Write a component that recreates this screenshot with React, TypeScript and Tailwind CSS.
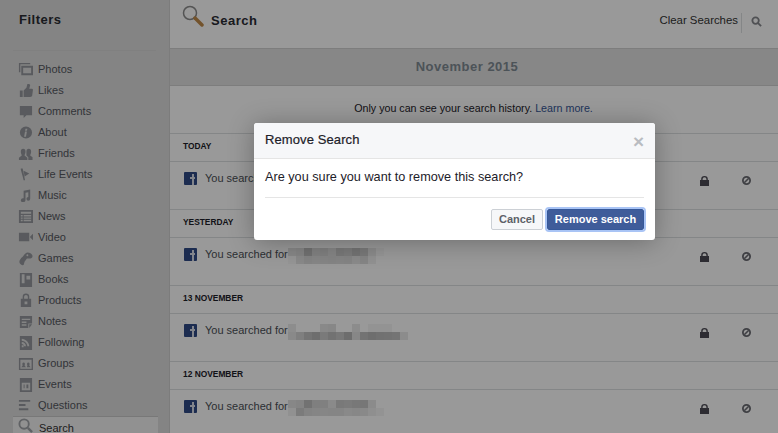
import type { ReactNode } from "react"

const Ico = ({ children, className = "" }: { children: ReactNode; className?: string }) => (
  <svg viewBox="0 0 16 16" className={"w-[15px] h-[15px] shrink-0 fill-[#94979d] " + className}>
    {children}
  </svg>
)

const filters: { label: string; icon: ReactNode }[] = [
  { label: "Photos", icon: <path fillRule="evenodd" d="M1 1h12v1.500H2.500V11H1zM3.500 4H16v10H3.500zM5.500 6v6H14V6z" /> },
  { label: "Likes", icon: <path d="M2 8h3v7H2zM6 8l3-3 1-4h2l1 1-1 4h3l1 1-1 7-2 1H6z" /> },
  { label: "Comments", icon: <path d="M2 2h13v10H9l-3 3v-3H2z" /> },
  { label: "About", icon: <path fillRule="evenodd" d="M8.500 1.500a6.500 6.500 0 1 1 0 13 6.500 6.500 0 0 1 0-13zM8 4l-.5 2h2L10 4zM7.500 7L6.500 12.500h2l1-5.500z" /> },
  { label: "Friends", icon: <path d="M5.500 3a2.500 3 0 0 1 2.500 3c0 2-1 3-1 4l3 2.500V15H1v-2.500L4 10c0-1-1-2-1-4a2.500 3 0 0 1 2.500-3zM11.500 3a2.500 3 0 0 1 2.500 3c0 2-1 3-1 4l2.500 2V15H11v-3l-2-2c0-1 0-2 0-4a2.500 3 0 0 1 2.500-3z" /> },
  { label: "Life Events", icon: <path d="M3 1.500h2L7.500 14H6L5 10 3 3zM6 4l6 3-5 3z" /> },
  { label: "Music", icon: <path d="M6 3l7-1.500v10a2 2 0 1 1-2-2V4.500L8 5v8a2.500 2 0 1 1-2-2z" /> },
  { label: "News", icon: <path fillRule="evenodd" d="M1 1h15v14H1zM3 3v2h11V3zM3 6.500V8h2V6.500zM6 6.500V8h8V6.500zM3 9v1.500h2V9zM6 9v1.500h8V9zM3 11.500V13h2v-1.500zM6 11.500V13h8v-1.500z" /> },
  { label: "Video", icon: <path d="M1 3h11v9H1zM13 7l3-3v7l-3-3z" /> },
  { label: "Games", icon: <path fillRule="evenodd" d="M10 1.500c3 0 5.500 2 5.500 4 0 1.500-1.500 2.500-3.500 2.500H9.500L7 11.500 6 15c-2 .5-4-1-4.500-3-.3-2 1.500-4.500 3.500-6l2-2.500c1-1 2-2 3-2zM10 3.500a1 1 0 1 0 0 2 1 1 0 0 0 0-2z" /> },
  { label: "Books", icon: <path fillRule="evenodd" d="M2 1h13v15H2zM4 2.500V12h3V2.500zM9 4v4h4V4z" /> },
  { label: "Products", icon: <path fillRule="evenodd" d="M3 6h2V4a3.500 3.500 0 0 1 7 0v2h2v9H3zM6.500 6h4V4a2 2 0 0 0-4 0zM7 9v3h3V9z" /> },
  { label: "Notes", icon: <path fillRule="evenodd" d="M2 2h13v8h-4v5H2zM4 5v1.500h9V5zM4 8v1.500h5V8zM4 11v1.500h5V11zM12 11h3l-3 4z" /> },
  { label: "Following", icon: <path fillRule="evenodd" d="M2 1h13v15H2zM4 4v2c3 0 6 3 6 6h2c0-4-4-8-8-8zM4 7.500v2c1.500 0 2.500 1 2.500 2.500h2c0-2.500-2-4.500-4.500-4.500zM4 11v2h2v-2z" /> },
  { label: "Groups", icon: <path fillRule="evenodd" d="M1 2h15v13H1zM2.500 4v9.500h12V4zM6 7a1.500 2 0 0 1 1 3l1.500 2H3.500L5 10a1.500 2 0 0 1 1-3zM11 7a1.500 2 0 0 1 1 3l1.500 2H9.500L10 10a1.500 2 0 0 1 1-3z" /> },
  { label: "Events", icon: <path fillRule="evenodd" d="M2 1h13v15H2zM4 6v8h9V6zM6 8h1v4H6zM9 8h2v4H9z" /> },
  { label: "Questions", icon: <path d="M1 2h12v2H1zM1 6.500h7v2H1zM1 11h10v2H1z" /> },
]

// pixelated parts of the searched term, grey levels per 8px block
const blurs = {
  a: [
    [226, 220, 188, 216, 212, 222, 200, 206, 192, 202, 232, 248],
    [248, 228, 220, 224, 222, 220, 222, 220, 230, 222, 242, 255],
  ],
  b: [
    [236, 255, 255, 255, 228, 226, 255, 255, 234, 255, 246, 246, 246, 255, 255],
    [228, 212, 194, 184, 204, 190, 200, 182, 226, 192, 184, 188, 190, 194, 234],
  ],
  c: [
    [226, 220, 190, 212, 214, 230, 202, 206, 200, 198, 232, 255],
    [242, 206, 218, 222, 224, 222, 222, 228, 226, 228, 238, 246],
  ],
}

const Blur = ({ rows }: { rows: number[][] }) => (
  <div className="flex flex-col">
    {rows.map((row, i) => (
      <div key={i} className="flex">
        {row.map((g, j) => (
          <div key={j} className="w-[8px] h-[8px]" style={{ backgroundColor: `rgb(${g},${g},${g})` }} />
        ))}
      </div>
    ))}
  </div>
)

const FbIcon = () => (
  <div className="relative w-[13px] h-[13px] rounded-[1px] bg-[#2f4a85] overflow-hidden shrink-0">
    <div className="absolute right-[2px] top-[5px] w-[5px] h-[2px] bg-[#d8dde8]" />
    <div className="absolute right-[3px] top-[2px] w-[2px] h-[11px] bg-[#d8dde8]" />
  </div>
)

const Lock = () => (
  <svg viewBox="0 0 9 10" className="w-[9px] h-[10px] fill-[#4c4a54]">
    <path fillRule="evenodd" d="M0 4h1.200V3a3.300 3 0 0 1 6.600 0v1H9v6H0zM2.600 4h3.800V3a1.900 1.700 0 0 0-3.800 0z" />
  </svg>
)

const Block = () => (
  <svg viewBox="0 0 10 10" className="w-[9px] h-[9px]">
    <circle cx="5" cy="5" r="4" fill="none" stroke="#6a6b72" strokeWidth="2" />
    <path d="M2.500 7.500l5-5" stroke="#6a6b72" strokeWidth="1.800" />
  </svg>
)

const Group = ({ date, blur }: { date: string; blur?: number[][] }) => (
  <div>
    <div className="h-[28px] flex items-start pt-[6px] px-[13px] border-t border-[#dddfe2] text-[8.400px] font-bold uppercase text-[#1d2129]">
      {date}
    </div>
    <div className="h-[48px] border-t border-[#dddfe2] flex items-start pl-[14px] pt-[10px]">
      <FbIcon />
      <div className="ml-[8px] flex items-start w-[495px] h-[16px] text-[#4b4f56] text-[11px] leading-[13px] whitespace-nowrap">
        <span>You searched for</span>
        {blur && <Blur rows={blur} />}
      </div>
      <div className="mt-[4px]"><Lock /></div>
      <div className="ml-[33px] mt-[4px]"><Block /></div>
    </div>
  </div>
)

export default function App() {
  return (
    <div className="relative w-[778px] h-[433px] overflow-hidden flex bg-white font-['Liberation_Sans',Arial,sans-serif]">
      <aside className="w-[170px] shrink-0 bg-[#dcdcdc] border-r border-[#cfcfcf]">
        <div className="h-[51px] mx-[13px] border-b border-[#d6d6d6] pl-[6px] pt-[10px] text-[13px] font-bold tracking-[0.5px] text-[#2a2c33]">
          Filters
        </div>
        <div className="pt-[8px] pl-[18px]">
          {filters.map((f) => (
            <div key={f.label} className="h-[21px] flex items-center gap-[5px] text-[11px] text-[#555860]">
              <Ico>{f.icon}</Ico>
              <span>{f.label}</span>
            </div>
          ))}
        </div>
        <div className="ml-[13px] w-[145px] h-[24px] bg-[#f2f2f2] border-t border-[#c8c8c8] flex items-start gap-[6px] pl-[5px] pt-[1px] text-[11px] text-[#333]">
          <svg viewBox="0 0 16 16" className="w-[15px] h-[15px] fill-none stroke-[#a0a3a8] stroke-2">
            <circle cx="6.500" cy="6.500" r="5" />
            <path d="M10.500 10.500l4.500 4.500" strokeWidth="2.500" />
          </svg>
          <span className="mt-[2px]">Search</span>
        </div>
      </aside>

      <main className="flex-1 min-w-0">
        <header className="h-[48px] flex items-start bg-white">
          <svg viewBox="0 0 22 22" className="w-[22px] h-[22px] ml-[12px] mt-[5px]">
            <circle cx="8" cy="8" r="6.500" fill="none" stroke="#8c8c8c" strokeWidth="1.500" />
            <path d="M13 13l7 7" stroke="#c08a4a" strokeWidth="3.500" strokeLinecap="round" />
          </svg>
          <div className="ml-[7px] mt-[11px] text-[13px] font-bold tracking-[0.5px] text-[#2a2c33]">Search</div>
          <div className="ml-auto mt-[12px] text-[11.400px] text-[#333]">Clear Searches</div>
          <div className="ml-[3px] mt-[13px] h-[20px] border-l border-[#dddfe2]" />
          <svg viewBox="0 0 12 12" className="w-[11px] h-[11px] ml-[9px] mt-[16px] mr-[16px] fill-none stroke-[#85878c] stroke-2">
            <circle cx="5" cy="5" r="3.500" />
            <path d="M7.500 7.500l3.500 3.500" />
          </svg>
        </header>
        <div className="h-[38px] bg-[#e1e1e2] border-y border-[#d0d0d0] flex items-center justify-center pr-[14px] text-[13px] font-bold tracking-[0.5px] text-[#7f8a93]">
          November 2015
        </div>
        <div className="h-[47px] flex items-center justify-center pb-[2px] pr-[1px] text-[10.700px] text-[#1d2129]">
          <span>
            Only you can see your search history. <span className="text-[#365899]">Learn more.</span>
          </span>
        </div>
        <Group date="Today" />
        <Group date="Yesterday" blur={blurs.a} />
        <Group date="13 November" blur={blurs.b} />
        <Group date="12 November" blur={blurs.c} />
      </main>

      <div className="absolute inset-0 bg-black/40" />

      <div className="absolute left-[254px] top-[123px] w-[401px] h-[117px] bg-white rounded-[3px] shadow-[0_2px_26px_rgba(0,0,0,0.3)] flex flex-col overflow-hidden">
        <div className="h-[36px] shrink-0 bg-[#f6f7f9] border-b border-[#e5e5e5] flex items-center pl-[11px] pr-[11px] pb-[2px] text-[#1d2129]">
          <span className="text-[13px] tracking-[0.1px] [-webkit-text-stroke:0.2px_#1d2129]">Remove Search</span>
          <span className="ml-auto mt-[4px] text-[#b9bcc1] text-[19px] font-bold leading-none">×</span>
        </div>
        <div className="mx-[11px] h-[39px] border-b border-[#e5e5e5] pt-[10px] text-[12.700px] leading-[17px] text-[#1d2129]">
          Are you sure you want to remove this search?
        </div>
        <div className="flex justify-end gap-[4px] pt-[11px] pr-[11px]">
          <button className="h-[21px] w-[52px] border border-[#ccd0d5] bg-[#f6f7f9] text-[11px] font-bold text-[#5d6168] rounded-[2px]">
            Cancel
          </button>
          <button className="h-[21px] w-[97px] bg-[#3f5c9a] text-white text-[11px] font-bold rounded-[2px] border border-[#365899] outline-2 outline-[#a9c4f5]">
            Remove search
          </button>
        </div>
      </div>
    </div>
  )
}
